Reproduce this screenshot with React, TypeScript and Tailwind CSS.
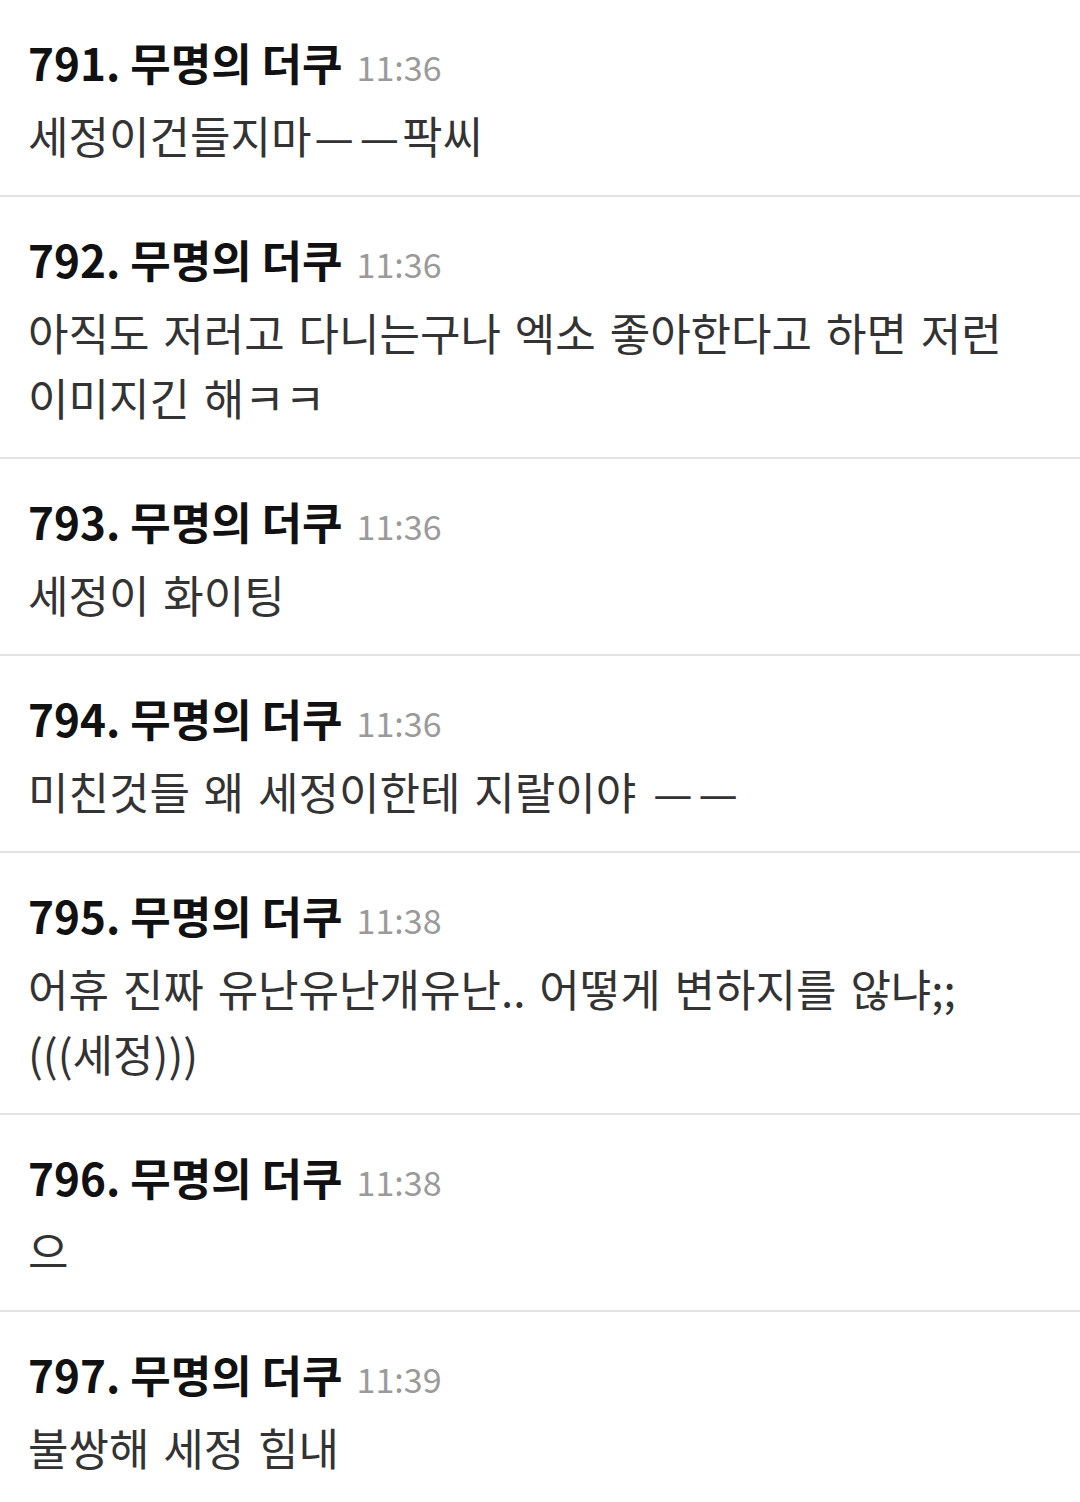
import React from 'react'

interface Comment {
  no: number
  time: string
  body: string
}

const comments: Comment[] = [
  { no: 791, time: '11:36', body: '세정이건들지마——팍씨' },
  { no: 792, time: '11:36', body: '아직도 저러고 다니는구나 엑소 좋아한다고 하면 저런 이미지긴 해ㅋㅋ' },
  { no: 793, time: '11:36', body: '세정이 화이팅' },
  { no: 794, time: '11:36', body: '미친것들 왜 세정이한테 지랄이야 ——' },
  { no: 795, time: '11:38', body: '어휴 진짜 유난유난개유난.. 어떻게 변하지를 않냐;; (((세정)))' },
  { no: 796, time: '11:38', body: '으' },
  { no: 797, time: '11:39', body: '불쌍해 세정 힘내' }
]

// em dashes get a little air so a pair doesn't run together
function Body({ text }: { text: string }) {
  const parts = text.split('—')
  return (
    <>
      {parts.map((p, i) => (
        <React.Fragment key={i}>
          {p}
          {i < parts.length - 1 && <span className="mx-[3px]">—</span>}
        </React.Fragment>
      ))}
    </>
  )
}

function CommentRow({ comment, last }: { comment: Comment; last: boolean }) {
  return (
    <div className={`pl-[28px] pr-[40px] pt-[36px] pb-[27px] ${last ? '' : 'border-b-2 border-[#e2e2e2]'}`}>
      <div className="flex h-[52px] items-baseline overflow-visible leading-[52px]">
        <span className="text-[44px] font-bold text-[#111]">
          {comment.no}. 무명의 더쿠
        </span>
        <span className="ml-[14px] text-[34px] text-[#9a9a9a]">{comment.time}</span>
      </div>
      <p className="mt-[15px] break-keep text-[44px] leading-[65px] text-[#333] [word-spacing:4px]">
        <Body text={comment.body} />
      </p>
    </div>
  )
}

export default function App() {
  return (
    <div className="min-h-[1502px] w-[1080px] bg-white font-['Noto_Sans_CJK_KR','Noto_Sans',sans-serif]">
      {comments.map((c, i) => (
        <CommentRow key={c.no} comment={c} last={i === comments.length - 1} />
      ))}
    </div>
  )
}
